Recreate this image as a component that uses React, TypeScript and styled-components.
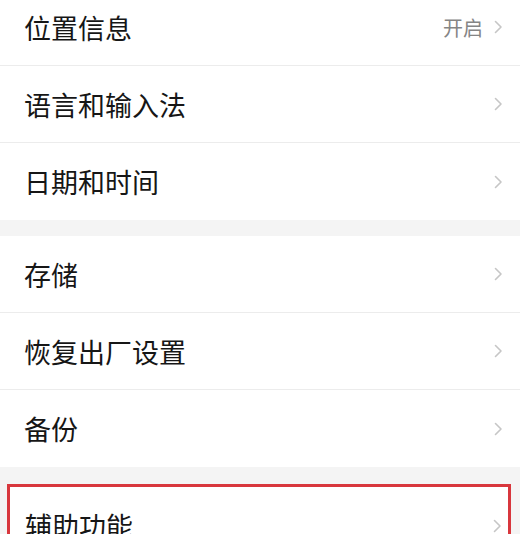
import { createGlobalStyle, styled } from "styled-components";

const GlobalStyle = createGlobalStyle`
  html, body {
    margin: 0;
    padding: 0;
    background: #ffffff;
    overflow: hidden;
  }
  body {
    font-family: "Noto Sans CJK SC", "Noto Sans", sans-serif;
  }
`;

type Item = { label: string; value?: string };

const groups: Item[][] = [
  [{ label: "位置信息", value: "开启" }, { label: "语言和输入法" }, { label: "日期和时间" }],
  [{ label: "存储" }, { label: "恢复出厂设置" }, { label: "备份" }],
];

const Chevron = () => (
  <svg width="9" height="14" viewBox="0 0 9 14" fill="none">
    <path d="M1.5 1.5L7 7L1.5 12.5" stroke="#c6c6c6" strokeWidth="1.6" strokeLinecap="round" strokeLinejoin="round" />
  </svg>
);

const SettingRow = ({ item, inset }: { item: Item; inset?: boolean }) => (
  <Row $inset={inset}>
    <Label>{item.label}</Label>
    <Right>
      {item.value && <Value>{item.value}</Value>}
      <Chevron />
    </Right>
  </Row>
);

const App = () => {
  return (
    <Page>
      <GlobalStyle />
      {groups.map((items, i) => (
        <Section key={i} $first={i === 0}>
          {items.map((item) => (
            <SettingRow key={item.label} item={item} />
          ))}
        </Section>
      ))}
      <Highlight>
        <SettingRow item={{ label: "辅助功能" }} inset />
      </Highlight>
    </Page>
  );
};
export default App;

const Page = styled.div`
  width: 520px;
  height: 534px;
  overflow: hidden;
  background: #f4f4f4;
  display: flex;
  flex-direction: column;
`;

const Section = styled.div<{ $first?: boolean }>`
  background: #ffffff;
  margin-top: ${(p) => (p.$first ? "-11px" : "16px")};
  flex-shrink: 0;
`;

const Row = styled.div<{ $inset?: boolean }>`
  display: flex;
  align-items: center;
  justify-content: space-between;
  box-sizing: border-box;
  height: 77px;
  padding: ${(p) => (p.$inset ? "0 6px 0 15px" : "0 17px 0 24px")};
  border-bottom: 1px solid #ececec;
  background: #ffffff;

  &:last-child {
    border-bottom: none;
  }
`;

const Label = styled.span`
  font-size: 27px;
  color: #161616;
  letter-spacing: 0;
`;

const Right = styled.div`
  display: flex;
  align-items: center;
  gap: 11px;
`;

const Value = styled.span`
  font-size: 20px;
  color: #858585;
`;

const Highlight = styled.div`
  flex-shrink: 0;
  margin: 17px 9px 0 7px;
  border: 3px solid #d8373d;
  border-bottom: none;
  background: #ffffff;
`;
